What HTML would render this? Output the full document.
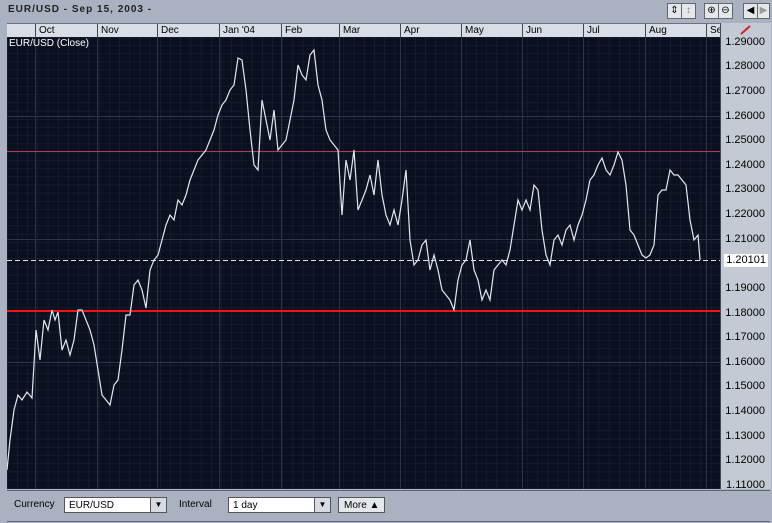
<!DOCTYPE html>
<html><head><style>
body{margin:0;width:772px;height:523px;background:#aab2c2;font-family:"Liberation Sans",sans-serif;position:relative;overflow:hidden}
.t{position:absolute;font-size:11px;color:#000}
.hdr{position:absolute;left:7px;top:23px;width:713px;height:13px;background:#d9dde5;border-top:1px solid #6a7080;border-bottom:1px solid #404858}
.m{position:absolute;top:0;height:13px;border-left:1px solid #404858;font-size:10px;padding-left:3px;line-height:13px}
.ax{position:absolute;left:720px;top:23px;width:50px;height:466px;background:#c4cad4;border-left:1px solid #404858}
.lbl{position:absolute;right:6px;font-size:11px;line-height:11px}
.btn{position:absolute;top:3px;height:14px;background:#e4e7ec;border:1px solid #666;font-size:10px;text-align:center;line-height:14px}
.bot{position:absolute;left:7px;top:490px;width:763px;height:30px;border-top:1px solid #606878;border-bottom:1px solid #606878}
.sel{position:absolute;top:6px;height:16px;background:#fff;border:1px solid #555;font-size:10px;line-height:16px;padding-left:4px;box-sizing:border-box}
.dd{position:absolute;right:0;top:0;width:15px;height:14px;background:#d8dce2;border-left:1px solid #555;font-size:8px;text-align:center;line-height:14px}
</style></head><body>
<div class="t" style="left:8px;top:4px;font-size:10px;font-weight:bold;letter-spacing:1px;color:#202020">EUR/USD - Sep 15, 2003 -</div>
<div class="btn" style="left:667px;width:13px">⇕</div><div class="btn" style="left:681px;width:13px;color:#888">↕</div>
<div class="btn" style="left:704px;width:13px">⊕</div><div class="btn" style="left:718px;width:13px">⊖</div>
<div class="btn" style="left:743px;width:13px">◀</div><div class="btn" style="left:757px;width:11px;color:#999">▶</div>
<div class="hdr">
<div class="m" style="left:28px">Oct</div><div class="m" style="left:90px">Nov</div><div class="m" style="left:150px">Dec</div><div class="m" style="left:212px">Jan '04</div><div class="m" style="left:274px">Feb</div><div class="m" style="left:332px">Mar</div><div class="m" style="left:393px">Apr</div><div class="m" style="left:454px">May</div><div class="m" style="left:515px">Jun</div><div class="m" style="left:576px">Jul</div><div class="m" style="left:638px">Aug</div><div class="m" style="left:699px">Se</div>
</div>
<div class="ax">
<svg width="50" height="14" style="position:absolute;top:0"><line x1="20" y1="11" x2="29" y2="3" stroke="#d02020" stroke-width="2"/></svg>
<div class="lbl" style="top:14px">1.29000</div><div class="lbl" style="top:38px">1.28000</div><div class="lbl" style="top:63px">1.27000</div><div class="lbl" style="top:88px">1.26000</div><div class="lbl" style="top:112px">1.25000</div><div class="lbl" style="top:137px">1.24000</div><div class="lbl" style="top:161px">1.23000</div><div class="lbl" style="top:186px">1.22000</div><div class="lbl" style="top:211px">1.21000</div><div class="lbl" style="top:231px;background:#fff;padding:1px 2px;right:3px">1.20101</div><div class="lbl" style="top:260px">1.19000</div><div class="lbl" style="top:285px">1.18000</div><div class="lbl" style="top:309px">1.17000</div><div class="lbl" style="top:334px">1.16000</div><div class="lbl" style="top:358px">1.15000</div><div class="lbl" style="top:383px">1.14000</div><div class="lbl" style="top:408px">1.13000</div><div class="lbl" style="top:432px">1.12000</div><div class="lbl" style="top:457px">1.11000</div>
</div>
<svg style="position:absolute;left:7px;top:37px" width="713" height="452">
<defs><pattern id="g" width="10.2" height="8.2" patternUnits="userSpaceOnUse"><path d="M0 0H10.2M0 0V8.2" stroke="#1c2436" stroke-width="1"/></pattern></defs>
<rect width="713" height="452" fill="#0a1020"/><rect width="713" height="452" fill="url(#g)"/>
<g stroke="#2c3446" stroke-width="1">
<line x1="28.5" y1="0" x2="28.5" y2="452"/><line x1="90.5" y1="0" x2="90.5" y2="452"/><line x1="150.5" y1="0" x2="150.5" y2="452"/><line x1="212.5" y1="0" x2="212.5" y2="452"/><line x1="274.5" y1="0" x2="274.5" y2="452"/><line x1="332.5" y1="0" x2="332.5" y2="452"/><line x1="393.5" y1="0" x2="393.5" y2="452"/><line x1="454.5" y1="0" x2="454.5" y2="452"/><line x1="515.5" y1="0" x2="515.5" y2="452"/><line x1="576.5" y1="0" x2="576.5" y2="452"/><line x1="638.5" y1="0" x2="638.5" y2="452"/><line x1="699.5" y1="0" x2="699.5" y2="452"/>
<line x1="0" y1="79.5" x2="713" y2="79.5"/><line x1="0" y1="202.5" x2="713" y2="202.5"/><line x1="0" y1="325.5" x2="713" y2="325.5"/>
</g>
<line x1="0" y1="114.5" x2="713" y2="114.5" stroke="#b04050" stroke-width="1"/>
<line x1="0" y1="223.5" x2="713" y2="223.5" stroke="#e0e4ec" stroke-width="1" stroke-dasharray="5,3"/>
<line x1="0" y1="274" x2="713" y2="274" stroke="#ff1010" stroke-width="2"/>
<g transform="translate(-7,-37)"><polyline fill="none" stroke="#e4e8f0" stroke-width="1.2" points="7,470 10,440 14,410 18,395 22,400 27,392 32,398 36,330 40,360 44,320 48,330 52,310 55,320 58,312 62,350 66,340 70,355 74,340 78,310 82,310 86,320 90,330 94,345 98,370 102,395 106,400 110,405 114,385 118,380 122,350 126,315 130,315 134,285 138,280 142,290 146,308 150,270 154,260 158,255 162,240 166,225 170,215 174,220 178,200 182,205 186,195 190,180 194,170 198,160 202,155 206,150 210,140 214,130 218,115 222,105 226,100 230,90 234,85 238,58 242,60 246,90 250,130 254,165 258,170 262,100 266,120 270,140 274,110 278,150 282,145 286,140 290,120 294,100 298,65 302,75 306,80 310,55 314,50 318,85 322,100 326,130 330,140 334,145 338,150 342,215 346,160 350,180 354,150 358,210 362,200 366,190 370,175 374,195 378,160 382,195 386,215 390,225 394,210 398,225 402,200 406,170 410,240 414,265 418,260 422,245 426,240 430,270 434,255 438,270 442,290 446,295 450,300 454,310 458,280 462,265 466,260 470,240 474,270 478,280 482,300 486,290 490,300 494,270 498,265 502,260 506,265 510,250 514,225 518,200 522,210 526,200 530,210 534,185 538,190 542,230 546,255 550,265 554,240 558,235 562,245 566,230 570,225 574,240 578,225 582,215 586,200 590,180 594,175 598,165 602,158 606,170 610,175 614,165 618,152 622,160 626,185 630,230 634,235 638,245 642,255 646,258 650,255 654,245 658,195 662,190 666,190 670,170 674,175 678,175 682,180 686,185 690,220 694,240 698,235 700,260"/></g>
<text x="2" y="9" fill="#fff" font-size="10" font-family="Liberation Sans">EUR/USD (Close)</text>
</svg>
<div class="bot">
<div class="t" style="left:7px;top:8px;font-size:10px">Currency</div>
<div class="sel" style="left:57px;width:103px">EUR/USD<div class="dd">▼</div></div>
<div class="t" style="left:172px;top:8px;font-size:10px">Interval</div>
<div class="sel" style="left:221px;width:103px">1 day<div class="dd">▼</div></div>
<div class="sel" style="left:331px;width:47px;background:#e4e7ec;padding-left:5px">More ▲</div>
</div>
</body></html>
